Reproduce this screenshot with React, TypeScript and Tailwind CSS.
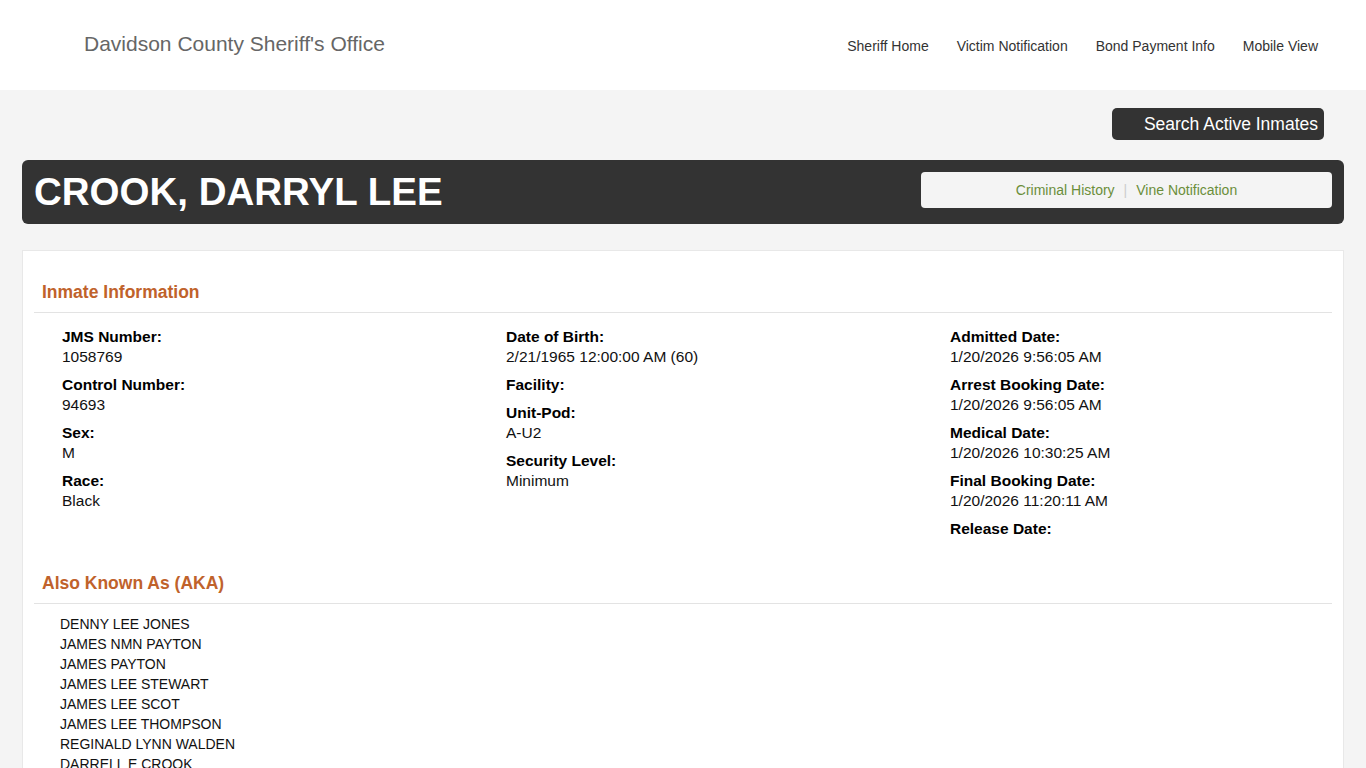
import React from 'react';

const navLinks = ['Sheriff Home', 'Victim Notification', 'Bond Payment Info', 'Mobile View'];

type Field = { label: string; value?: string };

const columns: Field[][] = [
  [
    { label: 'JMS Number:', value: '1058769' },
    { label: 'Control Number:', value: '94693' },
    { label: 'Sex:', value: 'M' },
    { label: 'Race:', value: 'Black' },
  ],
  [
    { label: 'Date of Birth:', value: '2/21/1965 12:00:00 AM (60)' },
    { label: 'Facility:' },
    { label: 'Unit-Pod:', value: 'A-U2' },
    { label: 'Security Level:', value: 'Minimum' },
  ],
  [
    { label: 'Admitted Date:', value: '1/20/2026 9:56:05 AM' },
    { label: 'Arrest Booking Date:', value: '1/20/2026 9:56:05 AM' },
    { label: 'Medical Date:', value: '1/20/2026 10:30:25 AM' },
    { label: 'Final Booking Date:', value: '1/20/2026 11:20:11 AM' },
    { label: 'Release Date:' },
  ],
];

const akaNames = [
  'DENNY LEE JONES',
  'JAMES NMN PAYTON',
  'JAMES PAYTON',
  'JAMES LEE STEWART',
  'JAMES LEE SCOT',
  'JAMES LEE THOMPSON',
  'REGINALD LYNN WALDEN',
  'DARRELL E CROOK',
];

function SectionHeading({ title, top }: { title: string; top: string }) {
  return (
    <div className={`${top} pb-[7px] pl-[8px] border-b border-[#e3e3e3]`}>
      <h2 className="text-[17.5px] leading-[26px] font-bold text-[#c0622b]">{title}</h2>
    </div>
  );
}

export default function App() {
  return (
    <div className="min-h-screen bg-[#f4f4f4] font-['Liberation_Sans',Arial,sans-serif]">
      {/* Header */}
      <header className="bg-white h-[90px] flex items-center justify-between">
        <div className="pl-[84px] text-[21px] text-[#666] -mt-[3px]">Davidson County Sheriff's Office</div>
        <nav className="flex items-center gap-[28px] pr-[48px] pt-[2px]">
          {navLinks.map((l) => (
            <a key={l} href="#" className="text-[14px] text-[#333]">
              {l}
            </a>
          ))}
        </nav>
      </header>

      <div className="px-[22px]">
        {/* Search button */}
        <div className="flex justify-end pt-[18px] pr-[20px]">
          <button className="h-[32px] bg-[#333] text-white text-[17.5px] rounded-[5px] pl-[32px] pr-[6px] pt-[2px] leading-none">
            Search Active Inmates
          </button>
        </div>

        {/* Name banner */}
        <div className="mt-[20px] bg-[#333] rounded-[6px] h-[64px] flex items-start justify-between pl-[12px] pr-[12px]">
          <h1 className="text-[38.5px] font-bold text-white leading-[64px]">CROOK, DARRYL LEE</h1>
          <div className="mt-[12px] w-[411px] h-[36px] bg-[#f4f4f4] rounded-[4px] flex items-center justify-center text-[14px]">
            <a href="#" className="text-[#6b8e3a]">Criminal History</a>
            <span className="text-[#ccc] mx-[9px]">|</span>
            <a href="#" className="text-[#6b8e3a]">Vine Notification</a>
          </div>
        </div>

        {/* Detail card */}
        <div className="mt-[26px] bg-white border border-[#e8e8e8] px-[11px] pb-6">
          <SectionHeading title="Inmate Information" top="pt-[28px]" />
          <div className="grid grid-cols-[444px_444px_1fr] pl-[28px] pt-[14px] text-[15.5px] leading-[20px] text-[#111]">
            {columns.map((col, i) => (
              <div key={i}>
                {col.map((f) => (
                  <div key={f.label} className="mb-[8px]">
                    <div className="font-bold text-black">{f.label}</div>
                    {f.value && <div>{f.value}</div>}
                  </div>
                ))}
              </div>
            ))}
          </div>

          <SectionHeading title="Also Known As (AKA)" top="pt-[23px]" />
          <div className="pl-[26px] pt-[10px] text-[14px] leading-[20px] text-[#111]">
            {akaNames.map((n) => (
              <div key={n}>{n}</div>
            ))}
          </div>
        </div>
      </div>
    </div>
  );
}
